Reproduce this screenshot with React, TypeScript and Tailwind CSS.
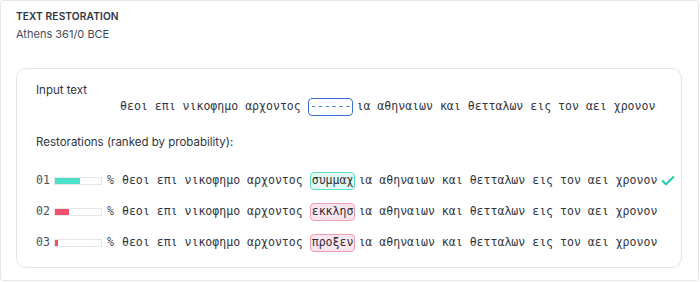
import { Check } from 'lucide-react'

const prefix = 'θεοι επι νικοφημο αρχοντος'
const suffix = 'ια αθηναιων και θετταλων εις τον αει χρονον'

const restorations = [
  { rank: '01', pct: 55, word: 'συμμαχ', good: true },
  { rank: '02', pct: 31, word: 'εκκλησ', good: false },
  { rank: '03', pct: 6, word: 'προξεν', good: false },
]

function Slot({ word, tone }: { word: string; tone: 'input' | 'good' | 'bad' }) {
  const toneClass =
    tone === 'input'
      ? 'border-[#3b6fd8] bg-white text-[#3b6fd8]'
      : tone === 'good'
        ? 'border-[#5ddfc6] bg-[#e3f9f3] text-[#2b2f3a]'
        : 'border-[#ee9ab0] bg-[#fde6ee] text-[#2b2f3a]'
  return (
    <span
      className={`ml-[7px] mr-[3px] inline-flex h-[18px] items-center rounded-[4px] border px-[1px] ${toneClass}`}
    >
      {word}
    </span>
  )
}

export default function App() {
  return (
    <div className="h-[282px] w-[700px] bg-white" style={{ fontFamily: 'Inter, "Noto Sans", sans-serif' }}>
      <div className="h-[281px] w-[699px] rounded-[3px] border border-[#e6e6e6] pl-[15px] pr-[16px] pt-[7px]">
        {/* Header */}
        <div className="text-[10.2px] font-semibold uppercase leading-[16px] tracking-[0.1px] text-[#2f3542]">
          Text Restoration
        </div>
        <div className="mt-[2px] text-[11px] leading-[16px] text-[#454c59]">Athens 361/0 BCE</div>

        {/* Card */}
        <div className="mt-[26px] h-[200px] rounded-[10px] border border-[#e3e5e8] pl-[19px] pt-[13px]">
          <div className="text-[11.5px] leading-[16px] text-[#2f3542]">Input text</div>

          <div
            className="flex h-[18px] items-center pl-[84px] text-[11.55px] text-[#2f3542]"
            style={{ fontFamily: '"DejaVu Sans Mono", "Liberation Mono", monospace' }}
          >
            <span className="whitespace-pre">{prefix}</span>
            <Slot word="------" tone="input" />
            <span className="whitespace-pre">{suffix}</span>
          </div>

          <div className="mt-[18px] text-[11.5px] leading-[16px] text-[#2f3542]">
            Restorations (ranked by probability):
          </div>

          <div
            className="mt-[22px] flex flex-col gap-[13px] text-[11.55px] text-[#2f3542]"
            style={{ fontFamily: '"DejaVu Sans Mono", "Liberation Mono", monospace' }}
          >
            {restorations.map((r) => (
              <div key={r.rank} className="flex h-[18px] items-center">
                <span className="w-[14px] text-[#4a505c]">{r.rank}</span>
                <div className="ml-[4px] h-[8px] w-[48px] border border-[#e4e6ea] bg-white">
                  <div
                    className={`h-full ${r.good ? 'bg-[#4fe0c8]' : 'bg-[#f2506c]'}`}
                    style={{ width: `${r.pct}%` }}
                  />
                </div>
                <span className="ml-[5px] text-[#4a505c]">%</span>
                <span className="ml-[8px] whitespace-pre">{prefix}</span>
                <Slot word={r.word} tone={r.good ? 'good' : 'bad'} />
                <span className="whitespace-pre">{suffix}</span>
                {r.good && <Check className="ml-[3px] h-[16px] w-[16px] text-[#1fc9a9]" strokeWidth={3} />}
              </div>
            ))}
          </div>
        </div>
      </div>
    </div>
  )
}
